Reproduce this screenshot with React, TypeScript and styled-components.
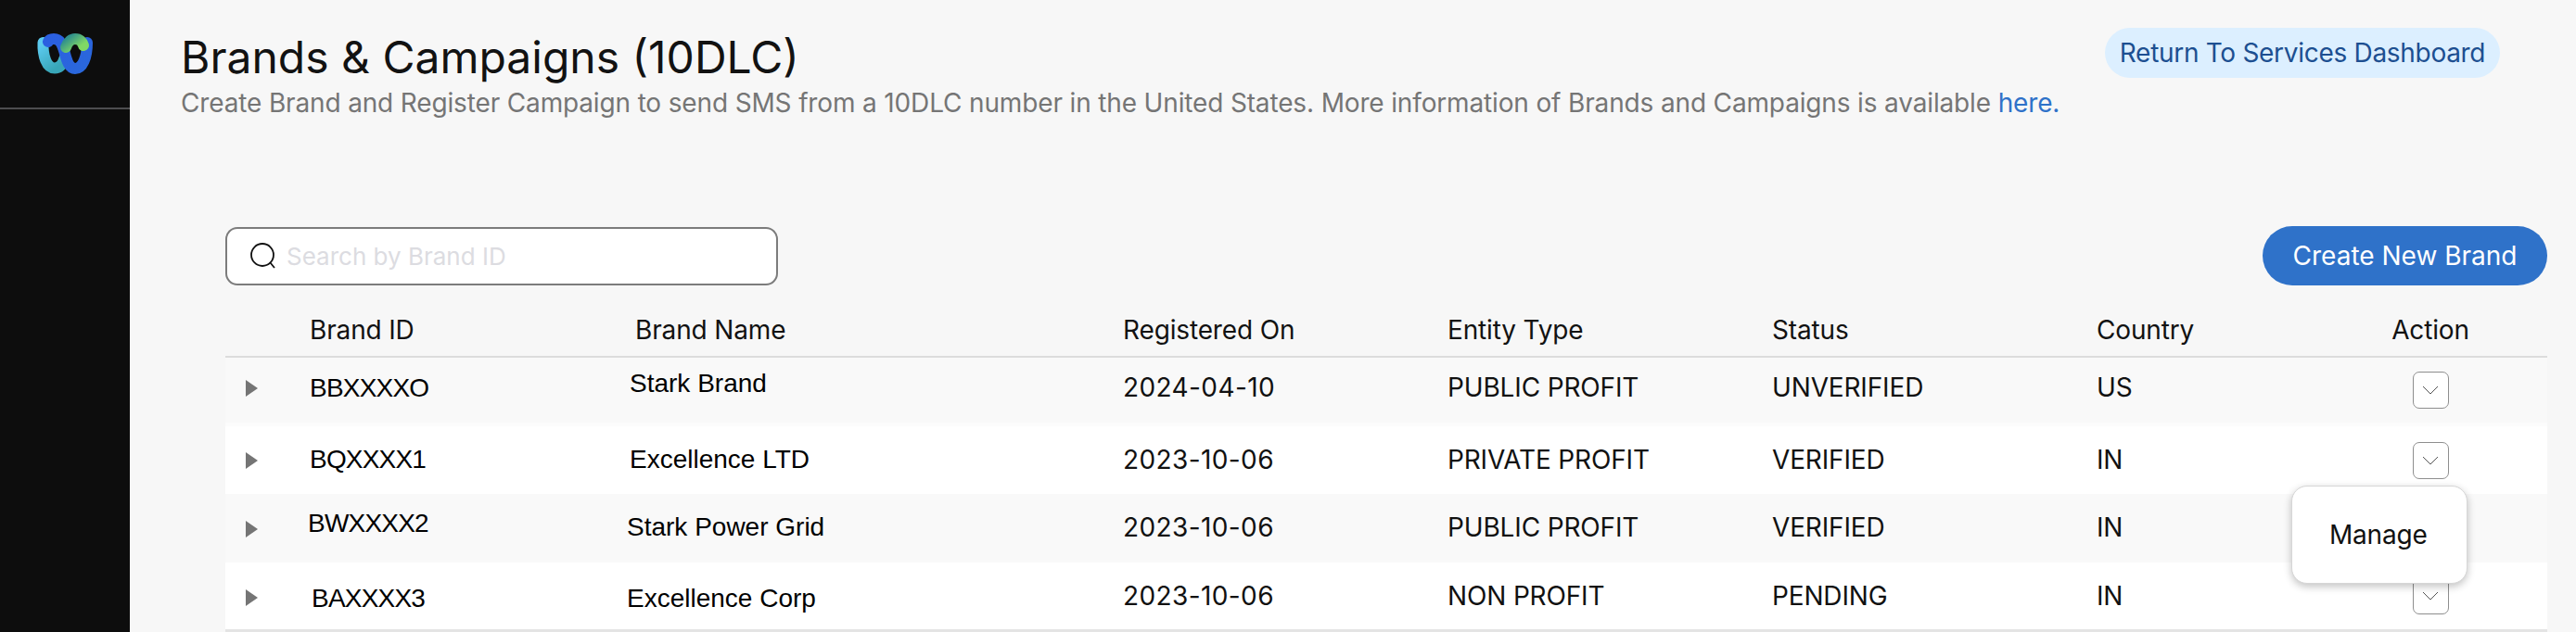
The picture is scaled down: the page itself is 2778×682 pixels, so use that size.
import styled, { createGlobalStyle } from "styled-components";

const brands = [
  { id: "BBXXXXO", name: "Stark Brand", date: "2024-04-10", type: "PUBLIC PROFIT", status: "UNVERIFIED", country: "US", height: 70, idX: 0, idLift: 2, nameX: 0, nameLift: 7, lift: 3, arrowLift: 2, tone: "#f9f9f9" },
  { id: "BQXXXX1", name: "Excellence LTD", date: "2023-10-06", type: "PRIVATE PROFIT", status: "VERIFIED", country: "IN", height: 73, idX: 0, idLift: 1, nameX: 0, nameLift: 1, lift: 1, arrowLift: 0, tone: "#ffffff" },
  { id: "BWXXXX2", name: "Stark Power Grid", date: "2023-10-06", type: "PUBLIC PROFIT", status: "VERIFIED", country: "IN", height: 74, idX: -2, idLift: 5, nameX: -3, nameLift: 1, lift: 1, arrowLift: -1, tone: "#f9f9f9" },
  { id: "BAXXXX3", name: "Excellence Corp", date: "2023-10-06", type: "NON PROFIT", status: "PENDING", country: "IN", height: 72, idX: 2, idLift: -3, nameX: -3, nameLift: -3, lift: 0, arrowLift: -2, tone: "#ffffff" },
];

const GRID = "91px 351px 526px 350px 350px 350px 260px 200px";

const App = () => {
  return (
    <>
      <GlobalStyle />
      <Page>
        <Sidebar>
          <LogoBar>
            <svg width="60" height="44" viewBox="0 0 60 44" fill="none">
              <defs>
                <linearGradient id="wxCyan" x1="0" y1="0" x2="0.6" y2="1">
                  <stop offset="0" stopColor="#5ccbf0" />
                  <stop offset="1" stopColor="#38a6b8" />
                </linearGradient>
                <linearGradient id="wxBlue" x1="0" y1="0" x2="1" y2="1">
                  <stop offset="0" stopColor="#2b5fe0" />
                  <stop offset="1" stopColor="#2a68dc" />
                </linearGradient>
                <linearGradient id="wxGreen" x1="0" y1="0" x2="1" y2="0.6">
                  <stop offset="0" stopColor="#2f8f8c" />
                  <stop offset="1" stopColor="#80d964" />
                </linearGradient>
              </defs>
              <path d="M6.5 10C6 24 10 37.5 19 37.5C25 37.5 28 32 29.5 27" stroke="url(#wxCyan)" strokeWidth="12" strokeLinecap="round" />
              <path d="M12 9C13 7 15 6 18 6C25 6 27 12 29.5 20C32 30 35 38 41 38C49 38 54 26 54 10" stroke="url(#wxBlue)" strokeWidth="12" strokeLinecap="round" />
              <path d="M31 15C33 9 37 6 41 6C46 6 49 9 50 13" stroke="url(#wxGreen)" strokeWidth="12" strokeLinecap="round" />
            </svg>
          </LogoBar>
        </Sidebar>
        <Main>
          <Header>
            <div>
              <Title>Brands &amp; Campaigns (10DLC)</Title>
              <Subtitle>
                Create Brand and Register Campaign to send SMS from a 10DLC number in the United States. More information of Brands and Campaigns is available <HereLink>here.</HereLink>
              </Subtitle>
            </div>
            <ReturnButton>Return To Services Dashboard</ReturnButton>
          </Header>
          <Section>
            <Toolbar>
              <SearchBox>
                <svg width="30" height="30" viewBox="0 0 30 30" fill="none" stroke="#111" strokeWidth="1.8">
                  <circle cx="14" cy="14" r="12" />
                  <path d="M22.5 22.5L27 28" />
                </svg>
                <SearchInput placeholder="Search by Brand ID" />
              </SearchBox>
              <CreateButton>Create New Brand</CreateButton>
            </Toolbar>
            <HeadRow>
              <span />
              <HeadCell>Brand ID</HeadCell>
              <HeadCell>Brand Name</HeadCell>
              <HeadCell>Registered On</HeadCell>
              <HeadCell>Entity Type</HeadCell>
              <HeadCell>Status</HeadCell>
              <HeadCell>Country</HeadCell>
              <ActionHead>Action</ActionHead>
            </HeadRow>
            <Body>
              {brands.map((brand, index) => (
                <Row key={brand.id} $height={brand.height} $tone={brand.tone} $gap={index === 0}>
                  <Arrow $lift={brand.arrowLift} />
                  <EditedCell $x={brand.idX} $lift={brand.idLift} $tight>
                    {brand.id}
                  </EditedCell>
                  <EditedCell $x={brand.nameX - 6} $lift={brand.nameLift}>
                    {brand.name}
                  </EditedCell>
                  <DateCell $lift={brand.lift}>{brand.date}</DateCell>
                  <Cell $lift={brand.lift}>{brand.type}</Cell>
                  <Cell $lift={brand.lift}>{brand.status}</Cell>
                  <Cell $lift={brand.lift}>{brand.country}</Cell>
                  <ActionCell>
                    <ChevronButton>
                      <svg width="18" height="10" viewBox="0 0 18 10" fill="none" stroke="#555" strokeWidth="1">
                        <path d="M1 1L9 9L17 1" />
                      </svg>
                    </ChevronButton>
                  </ActionCell>
                </Row>
              ))}
              <ManageMenu>Manage</ManageMenu>
            </Body>
            <ScrollEdge />
          </Section>
        </Main>
      </Page>
    </>
  );
};

const GlobalStyle = createGlobalStyle`
  html, body {
    margin: 0;
    height: 100%;
    overflow: hidden;
    background: #f7f7f7;
  }
  body {
    font-family: Inter, "Liberation Sans", sans-serif;
  }
`;

const Page = styled.div`
  display: flex;
  width: 2778px;
  height: 682px;
  overflow: hidden;
  background: #f7f7f7;
`;

const Sidebar = styled.aside`
  flex: 0 0 140px;
  background: #0d0d0d;
`;

const LogoBar = styled.div`
  height: 118px;
  padding-top: 36px;
  box-sizing: border-box;
  display: flex;
  justify-content: center;
  border-bottom: 2px solid #4d4d4f;
`;

const Main = styled.main`
  flex: 1;
  min-width: 0;
  padding: 0 31px 0 55px;
`;

const Header = styled.header`
  display: flex;
  justify-content: space-between;
  align-items: flex-start;
  height: 244px;
`;

const Title = styled.h1`
  margin: 34px 0 0;
  font-size: 48px;
  line-height: 56px;
  font-weight: 400;
  color: #121212;
  white-space: nowrap;
`;

const Subtitle = styled.p`
  margin: 4px 0 0;
  font-size: 28px;
  line-height: 34px;
  letter-spacing: -0.15px;
  color: #757575;
  white-space: nowrap;
`;

const HereLink = styled.span`
  color: #2f72c9;
`;

const ReturnButton = styled.button`
  margin: 30px 51px 0 0;
  width: 426px;
  height: 54px;
  padding: 0;
  border: none;
  border-radius: 27px;
  background: #dcefff;
  color: #1d4f91;
  font: 400 28px Inter, sans-serif;
  letter-spacing: -0.3px;
  white-space: nowrap;
`;

const Section = styled.section`
  margin-left: 48px;
`;

const Toolbar = styled.div`
  display: flex;
  justify-content: space-between;
  align-items: center;
  height: 64px;
`;

const SearchBox = styled.label`
  display: flex;
  align-items: center;
  gap: 10px;
  width: 596px;
  height: 63px;
  padding: 0 24px;
  box-sizing: border-box;
  background: #ffffff;
  border: 2px solid #7c7c7c;
  border-radius: 13px;
`;

const SearchInput = styled.input`
  flex: 1;
  min-width: 0;
  border: none;
  outline: none;
  padding: 0;
  background: transparent;
  font: 400 26px Inter, sans-serif;
  color: #111;
  &::placeholder {
    color: #dcdce1;
    opacity: 1;
  }
`;

const CreateButton = styled.button`
  width: 307px;
  height: 64px;
  border: none;
  border-radius: 32px;
  background: #2f72c9;
  color: #ffffff;
  font: 400 28px Inter, sans-serif;
  white-space: nowrap;
`;

const HeadRow = styled.div`
  display: grid;
  grid-template-columns: ${GRID};
  align-items: center;
  height: 78px;
  padding-top: 20px;
  box-sizing: border-box;
  border-bottom: 2px solid #dcdcdc;
`;

const HeadCell = styled.div`
  font-size: 28px;
  line-height: 34px;
  letter-spacing: -0.15px;
  color: #121212;
`;

const ActionHead = styled(HeadCell)`
  text-align: center;
`;

const Body = styled.div`
  position: relative;
`;

const Row = styled.div<{ $height: number; $tone: string; $gap: boolean }>`
  display: grid;
  grid-template-columns: ${GRID};
  align-items: center;
  height: ${({ $height }) => $height}px;
  margin-bottom: ${({ $gap }) => ($gap ? "4px" : "0")};
  background: ${({ $tone }) => $tone};
  box-shadow: ${({ $gap }) => ($gap ? "0 4px 0 #fcfcfc" : "none")};
`;

const Cell = styled.div<{ $lift: number }>`
  margin-bottom: ${({ $lift }) => $lift * 2}px;
  font-size: 28px;
  line-height: 34px;
  letter-spacing: -0.15px;
  color: #111111;
  white-space: nowrap;
`;

const DateCell = styled(Cell)`
  letter-spacing: 0.4px;
`;

const EditedCell = styled.div<{ $x: number; $lift: number; $tight?: boolean }>`
  margin-left: ${({ $x }) => $x}px;
  margin-bottom: ${({ $lift }) => $lift * 2}px;
  font-family: "Liberation Sans", Arial, sans-serif;
  font-size: 28px;
  line-height: 34px;
  letter-spacing: ${({ $tight }) => ($tight ? "-0.8px" : "0")};
  color: #000000;
  white-space: nowrap;
`;

const Arrow = styled.span<{ $lift: number }>`
  justify-self: start;
  margin-left: 22px;
  margin-bottom: ${({ $lift }) => $lift * 2}px;
  width: 0;
  height: 0;
  border-left: 13px solid #757575;
  border-top: 9px solid transparent;
  border-bottom: 9px solid transparent;
`;

const ActionCell = styled.div`
  display: flex;
  justify-content: center;
`;

const ChevronButton = styled.button`
  display: flex;
  align-items: center;
  justify-content: center;
  width: 39px;
  height: 40px;
  padding: 0;
  background: #ffffff;
  border: 1px solid #8e8e8e;
  border-radius: 7px;
`;

const ManageMenu = styled.div`
  position: absolute;
  top: 138px;
  right: 86px;
  width: 190px;
  height: 106px;
  box-sizing: border-box;
  padding-left: 40px;
  display: flex;
  align-items: center;
  background: #ffffff;
  border: 1px solid #d6d6d6;
  border-radius: 17px;
  box-shadow: 0 3px 8px rgba(0, 0, 0, 0.24);
  font-size: 28px;
  letter-spacing: -0.2px;
  color: #111111;
`;

const ScrollEdge = styled.div`
  height: 4px;
  background: #e4e4e4;
`;

export default App;
